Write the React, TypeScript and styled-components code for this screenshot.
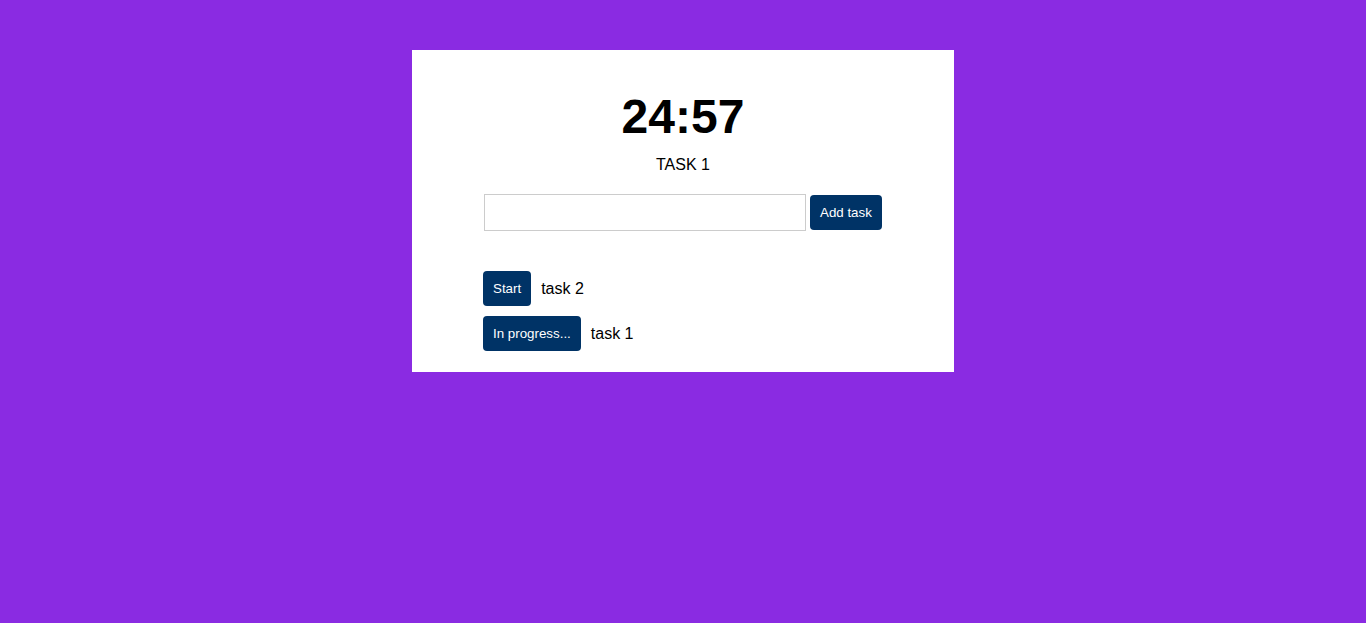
import React from "react";
import styled, { createGlobalStyle } from "styled-components";

const Global = createGlobalStyle`
  html, body { margin: 0; padding: 0; background: #8a2be2; }
  body { font-family: "Liberation Sans", Arial, sans-serif; color: #000; }
`;

const Page = styled.div`
  min-height: 623px;
  display: flex;
  justify-content: center;
  align-items: flex-start;
  padding-top: 50px;
  box-sizing: border-box;
`;

const Card = styled.div`
  width: 542px;
  background: #fff;
  display: flex;
  flex-direction: column;
  align-items: center;
  padding: 36px 0 21px;
  box-sizing: border-box;
`;

const Timer = styled.h1`
  margin: 0;
  font-size: 48px;
  font-weight: 700;
  line-height: 62px;
`;

const Current = styled.div`
  font-size: 16px;
  line-height: 18px;
  margin-top: 8px;
`;

const Form = styled.div`
  display: flex;
  align-items: center;
  gap: 4px;
  margin-top: 20px;
  width: 398px;
`;

const Input = styled.input`
  width: 322px;
  height: 37px;
  box-sizing: border-box;
  border: 1px solid #ccc;
  outline: none;
  font-size: 16px;
  padding: 0 8px;
`;

const Button = styled.button`
  background: #003366;
  color: #fff;
  border: none;
  border-radius: 4px;
  height: 35px;
  padding: 0 10px;
  font-family: "Liberation Sans", Arial, sans-serif;
  font-size: 13.33px;
  font-weight: 400;
  cursor: pointer;
  white-space: nowrap;
`;

const List = styled.ul`
  list-style: none;
  margin: 40px 0 0;
  padding: 0;
  width: 400px;
  display: flex;
  flex-direction: column;
  gap: 10px;
`;

const Row = styled.li`
  display: flex;
  align-items: center;
  gap: 10px;
  font-size: 16px;
`;

export default function App() {
  return (
    <>
      <Global />
      <Page>
        <Card>
          <Timer>24:57</Timer>
          <Current>TASK 1</Current>
          <Form>
            <Input type="text" />
            <Button>Add task</Button>
          </Form>
          <List>
            <Row>
              <Button>Start</Button>
              <span>task 2</span>
            </Row>
            <Row>
              <Button>In progress...</Button>
              <span>task 1</span>
            </Row>
          </List>
        </Card>
      </Page>
    </>
  );
}
